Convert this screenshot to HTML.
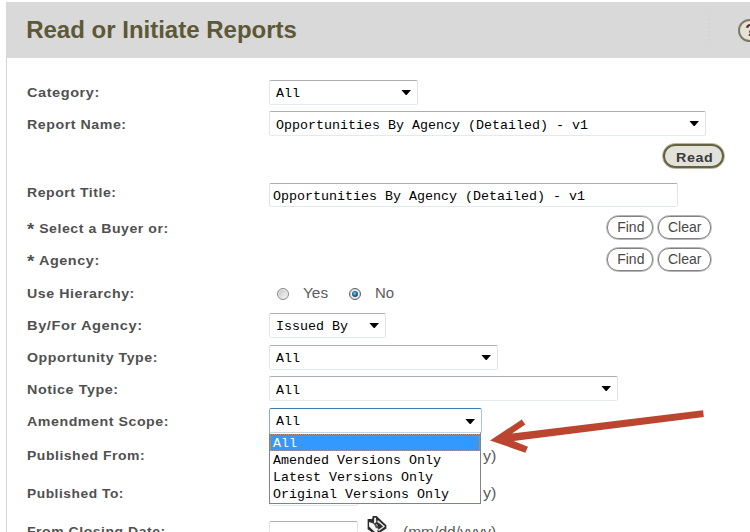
<!DOCTYPE html>
<html><head><meta charset="utf-8">
<style>
html,body{margin:0;padding:0;}
body{width:750px;height:532px;overflow:hidden;background:#fff;position:relative;font-family:"Liberation Sans",sans-serif;}
.abs{position:absolute;}
#hdr{left:6px;top:2px;width:744px;height:55.8px;background:#d9d9d9;}
#lborder{left:6px;top:57px;width:1px;height:475px;background:#d5d5d5;}
#title{left:26.2px;top:15.5px;font-size:24px;font-weight:bold;color:#5d5836;white-space:nowrap;line-height:28px;transform-origin:0 0;transform:scaleX(1.0);}
.lbl{left:27px;letter-spacing:0.5px;font-size:13px;font-weight:bold;color:#505050;white-space:nowrap;line-height:16px;transform-origin:0 0;display:inline-block;}
.sel{border:1px solid #e2e3ea;border-top-color:#abadb3;border-bottom-color:#e3e9ef;border-radius:2px;background:#fff;box-sizing:border-box;height:25px;font-family:"Liberation Mono",monospace;font-size:13.33px;color:#000;line-height:22px;padding-top:2px;padding-left:6px;white-space:nowrap;}
.arr{position:absolute;right:6px;top:9px;width:9.6px;height:5.4px;background:#000;clip-path:polygon(0 0,100% 0,50% 100%);}
.btn{border:1px solid #b4b4b4;border-radius:12.5px;box-sizing:border-box;height:25px;background:#fff;}
.btn i{position:absolute;left:0;top:0;right:0;bottom:0;border:1px solid #828282;border-radius:11px;}
.btn span,.rtxt{position:absolute;font-size:14px;color:#5c5c5c;white-space:nowrap;line-height:16px;transform-origin:0 0;display:inline-block;}
.btn span{color:#484848;}
.radio{width:12px;height:12px;border-radius:50%;box-sizing:border-box;border:1px solid #8a8a8a;background:linear-gradient(135deg,#b9b9b9 0,#dcdcdc 45%,#f8f8f8 100%);box-shadow:inset 0 0 0 1px #ececec;}
.opt{left:0px;width:210px;height:17px;font-family:"Liberation Mono",monospace;font-size:13.33px;line-height:17px;color:#000;white-space:nowrap;padding-left:3px;box-sizing:border-box;}
</style></head><body>
<div class="abs" id="hdr"></div>
<div class="abs" id="lborder"></div>
<div class="abs" id="title">Read or Initiate Reports</div>

<!-- header dotted separator + help icon -->
<div class="abs" style="left:709px;top:15px;width:1px;height:31px;background:repeating-linear-gradient(to bottom,#cbcbcb 0,#cbcbcb 1px,transparent 1px,transparent 4px);"></div>
<div class="abs" style="left:738px;top:19px;width:23px;height:23px;box-sizing:border-box;border:2px solid #7c7c62;border-radius:50%;background:#e4e2da;"></div>
<div class="abs" style="left:745.2px;top:21.8px;font-size:17px;font-weight:bold;color:#55272a;line-height:17px;">?</div>

<!-- labels -->
<div class="abs lbl" id="l1" style="top:85px;transform:scaleX(1.117)">Category:</div>
<div class="abs lbl" id="l2" style="top:117px;transform:scaleX(1.092)">Report Name:</div>
<div class="abs lbl" id="l3" style="top:185px;transform:scaleX(1.080)">Report Title:</div>
<div class="abs lbl" id="l4" style="top:221px;transform:scaleX(1.084)"><span style="font-size:17px;line-height:0;position:relative;top:2.3px;font-weight:bold">*</span> Select a Buyer or:</div>
<div class="abs lbl" id="l5" style="top:253px;transform:scaleX(1.110)"><span style="font-size:17px;line-height:0;position:relative;top:2.3px;font-weight:bold">*</span> Agency:</div>
<div class="abs lbl" id="l6" style="top:286px;transform:scaleX(1.092)">Use Hierarchy:</div>
<div class="abs lbl" id="l7" style="top:318px;transform:scaleX(1.128)">By/For Agency:</div>
<div class="abs lbl" id="l8" style="top:350px;transform:scaleX(1.090)">Opportunity Type:</div>
<div class="abs lbl" id="l9" style="top:382px;transform:scaleX(1.103)">Notice Type:</div>
<div class="abs lbl" id="l10" style="top:414px;transform:scaleX(1.092)">Amendment Scope:</div>
<div class="abs lbl" id="l11" style="top:448px;transform:scaleX(1.074)">Published From:</div>
<div class="abs lbl" id="l12" style="top:486px;transform:scaleX(1.060)">Published To:</div>
<div class="abs lbl" id="l13" style="top:524px;transform:scaleX(1.077)">From Closing Date:</div>

<!-- selects / inputs -->
<div class="abs sel" style="left:269px;top:80px;width:149px">All<span class="arr"></span></div>
<div class="abs sel" style="left:269px;top:111px;width:437px;padding-top:3px">Opportunities By Agency (Detailed) - v1<span class="arr" style="top:9px"></span></div>
<div class="abs sel" style="left:269px;top:183px;width:409px;height:24px;padding-left:3px;line-height:21px">Opportunities By Agency (Detailed) - v1</div>
<div class="abs sel" style="left:269px;top:313px;width:117px">Issued By<span class="arr"></span></div>
<div class="abs sel" style="left:269px;top:345px;width:229px">All<span class="arr"></span></div>
<div class="abs sel" style="left:269px;top:376px;width:349px;padding-top:3px">All<span class="arr"></span></div>

<!-- buttons -->
<div class="abs" style="left:662px;top:142.7px;width:63.4px;height:26px;box-sizing:border-box;border:1px solid #b9b7a6;border-radius:13px;background:#e2e1da;"><i style="position:absolute;left:0;top:0;right:0;bottom:0;border:2px solid #66623f;border-radius:12px;"></i><span id="bread" style="position:absolute;left:13px;top:6.3px;letter-spacing:0.5px;transform:scaleX(1.1);font-size:13px;font-weight:bold;color:#3a3a3a;line-height:16px;white-space:nowrap;transform-origin:0 0;display:inline-block;">Read</span></div>

<div class="abs btn" style="left:605.8px;top:215.2px;width:48px"><i></i><span class="bf" style="left:10.4px;top:3.2px">Find</span></div>
<div class="abs btn" style="left:656.8px;top:215.2px;width:55.4px"><i></i><span class="bc" style="left:10.2px;top:3.2px">Clear</span></div>
<div class="abs btn" style="left:605.8px;top:247.2px;width:48px"><i></i><span class="bf" style="left:10.4px;top:3.2px">Find</span></div>
<div class="abs btn" style="left:656.8px;top:247.2px;width:55.4px"><i></i><span class="bc" style="left:10.2px;top:3.2px">Clear</span></div>

<!-- radios -->
<div class="abs radio" style="left:277px;top:288px"></div>
<div class="abs rtxt" id="ryes" style="left:302.5px;top:285px;transform:scaleX(1.10)">Yes</div>
<div class="abs radio" style="left:349px;top:288px;border-color:#5f5f5f;background:#f4f4f4;box-shadow:inset 0 0 0 1px #d6d6d6;"><div style="position:absolute;left:2px;top:2px;width:6px;height:6px;border-radius:50%;background:radial-gradient(circle at 45% 40%,#7fcdf2 0,#1f75b3 40%,#0f3558 80%,#0a2540 100%);"></div></div>
<div class="abs rtxt" id="rno" style="left:374.5px;top:285px;transform:scaleX(1.065)">No</div>

<!-- remnants behind dropdown -->
<div class="abs rtxt" style="left:482.8px;top:447.7px;transform:scaleX(1.15)">y)</div>
<div class="abs rtxt" style="left:482.8px;top:485.3px;transform:scaleX(1.15)">y)</div>
<div class="abs sel" style="left:269px;top:483px;width:89px;height:23px"></div>
<div class="abs sel" style="left:269px;top:521px;width:89px;height:23px"></div>
<div class="abs rtxt" id="rmm" style="left:403.2px;top:524px;transform:scaleX(1.11)">(mm/dd/yyyy)</div>
<!-- calendar icon -->
<svg class="abs" style="left:360px;top:508px" width="40" height="24" viewBox="0 0 750 450">
<polygon fill="#2c2c2c" points="143,205 228,205 238,150 312,150 495,325 495,385 385,455 225,455 143,400"/>
<polygon fill="#f6f6f6" points="170,262 250,292 335,385 325,455 285,455 170,348"/>
<polygon fill="#ededed" points="266,182 300,182 306,268 262,290"/>
<polygon fill="#e8e8e8" points="335,225 470,345 350,435 340,395 410,345 325,262"/>
<polygon fill="#2c2c2c" points="352,275 432,345 350,405 347,378 392,345 345,300"/>
<polygon fill="#f2f2f2" points="300,300 332,318 322,352 290,335"/>
<polygon fill="#555" points="262,300 300,300 340,372 300,380"/>
</svg>

<!-- focused select -->
<div class="abs sel" style="left:269px;top:408px;width:213px;height:25px;border-color:#a9c6e2;border-left-color:#86abd3;border-top-color:#3d7bad;line-height:22px;padding-top:1.5px">All<span class="arr" style="top:10px"></span></div>

<!-- dropdown list -->
<div class="abs" style="left:269px;top:432px;width:212.3px;height:72px;border:1px solid #7e838c;border-top-color:#c4d6e8;background:#fff;box-sizing:border-box;">
  <div class="abs" style="left:0;top:0.6px;width:210.3px;height:17.4px;background:#3399ff;box-sizing:border-box;border:1px dotted #d08a52;"></div>
  <div class="abs" style="left:0;top:0.6px;width:210.3px;height:1px;background:repeating-linear-gradient(to right,#d08a52 0,#d08a52 1px,#6f747d 1px,#6f747d 2px);"></div>
  <div class="abs opt" style="top:2px;color:#fff;">All</div>
  <div class="abs opt" style="top:19px">Amended Versions Only</div>
  <div class="abs opt" style="top:36px">Latest Versions Only</div>
  <div class="abs opt" style="top:53px">Original Versions Only</div>
</div>

<!-- red arrow -->
<svg class="abs" style="left:0;top:0" width="750" height="532" viewBox="0 0 750 532">
<polygon fill="#bb452e" points="490,440.4 521.8,419.6 525.3,424.4 512,433.6 703.1,410.3 703.8,416.9 513.6,440.9 528,446.8 525.3,452.7"/>
</svg>
</body></html>
